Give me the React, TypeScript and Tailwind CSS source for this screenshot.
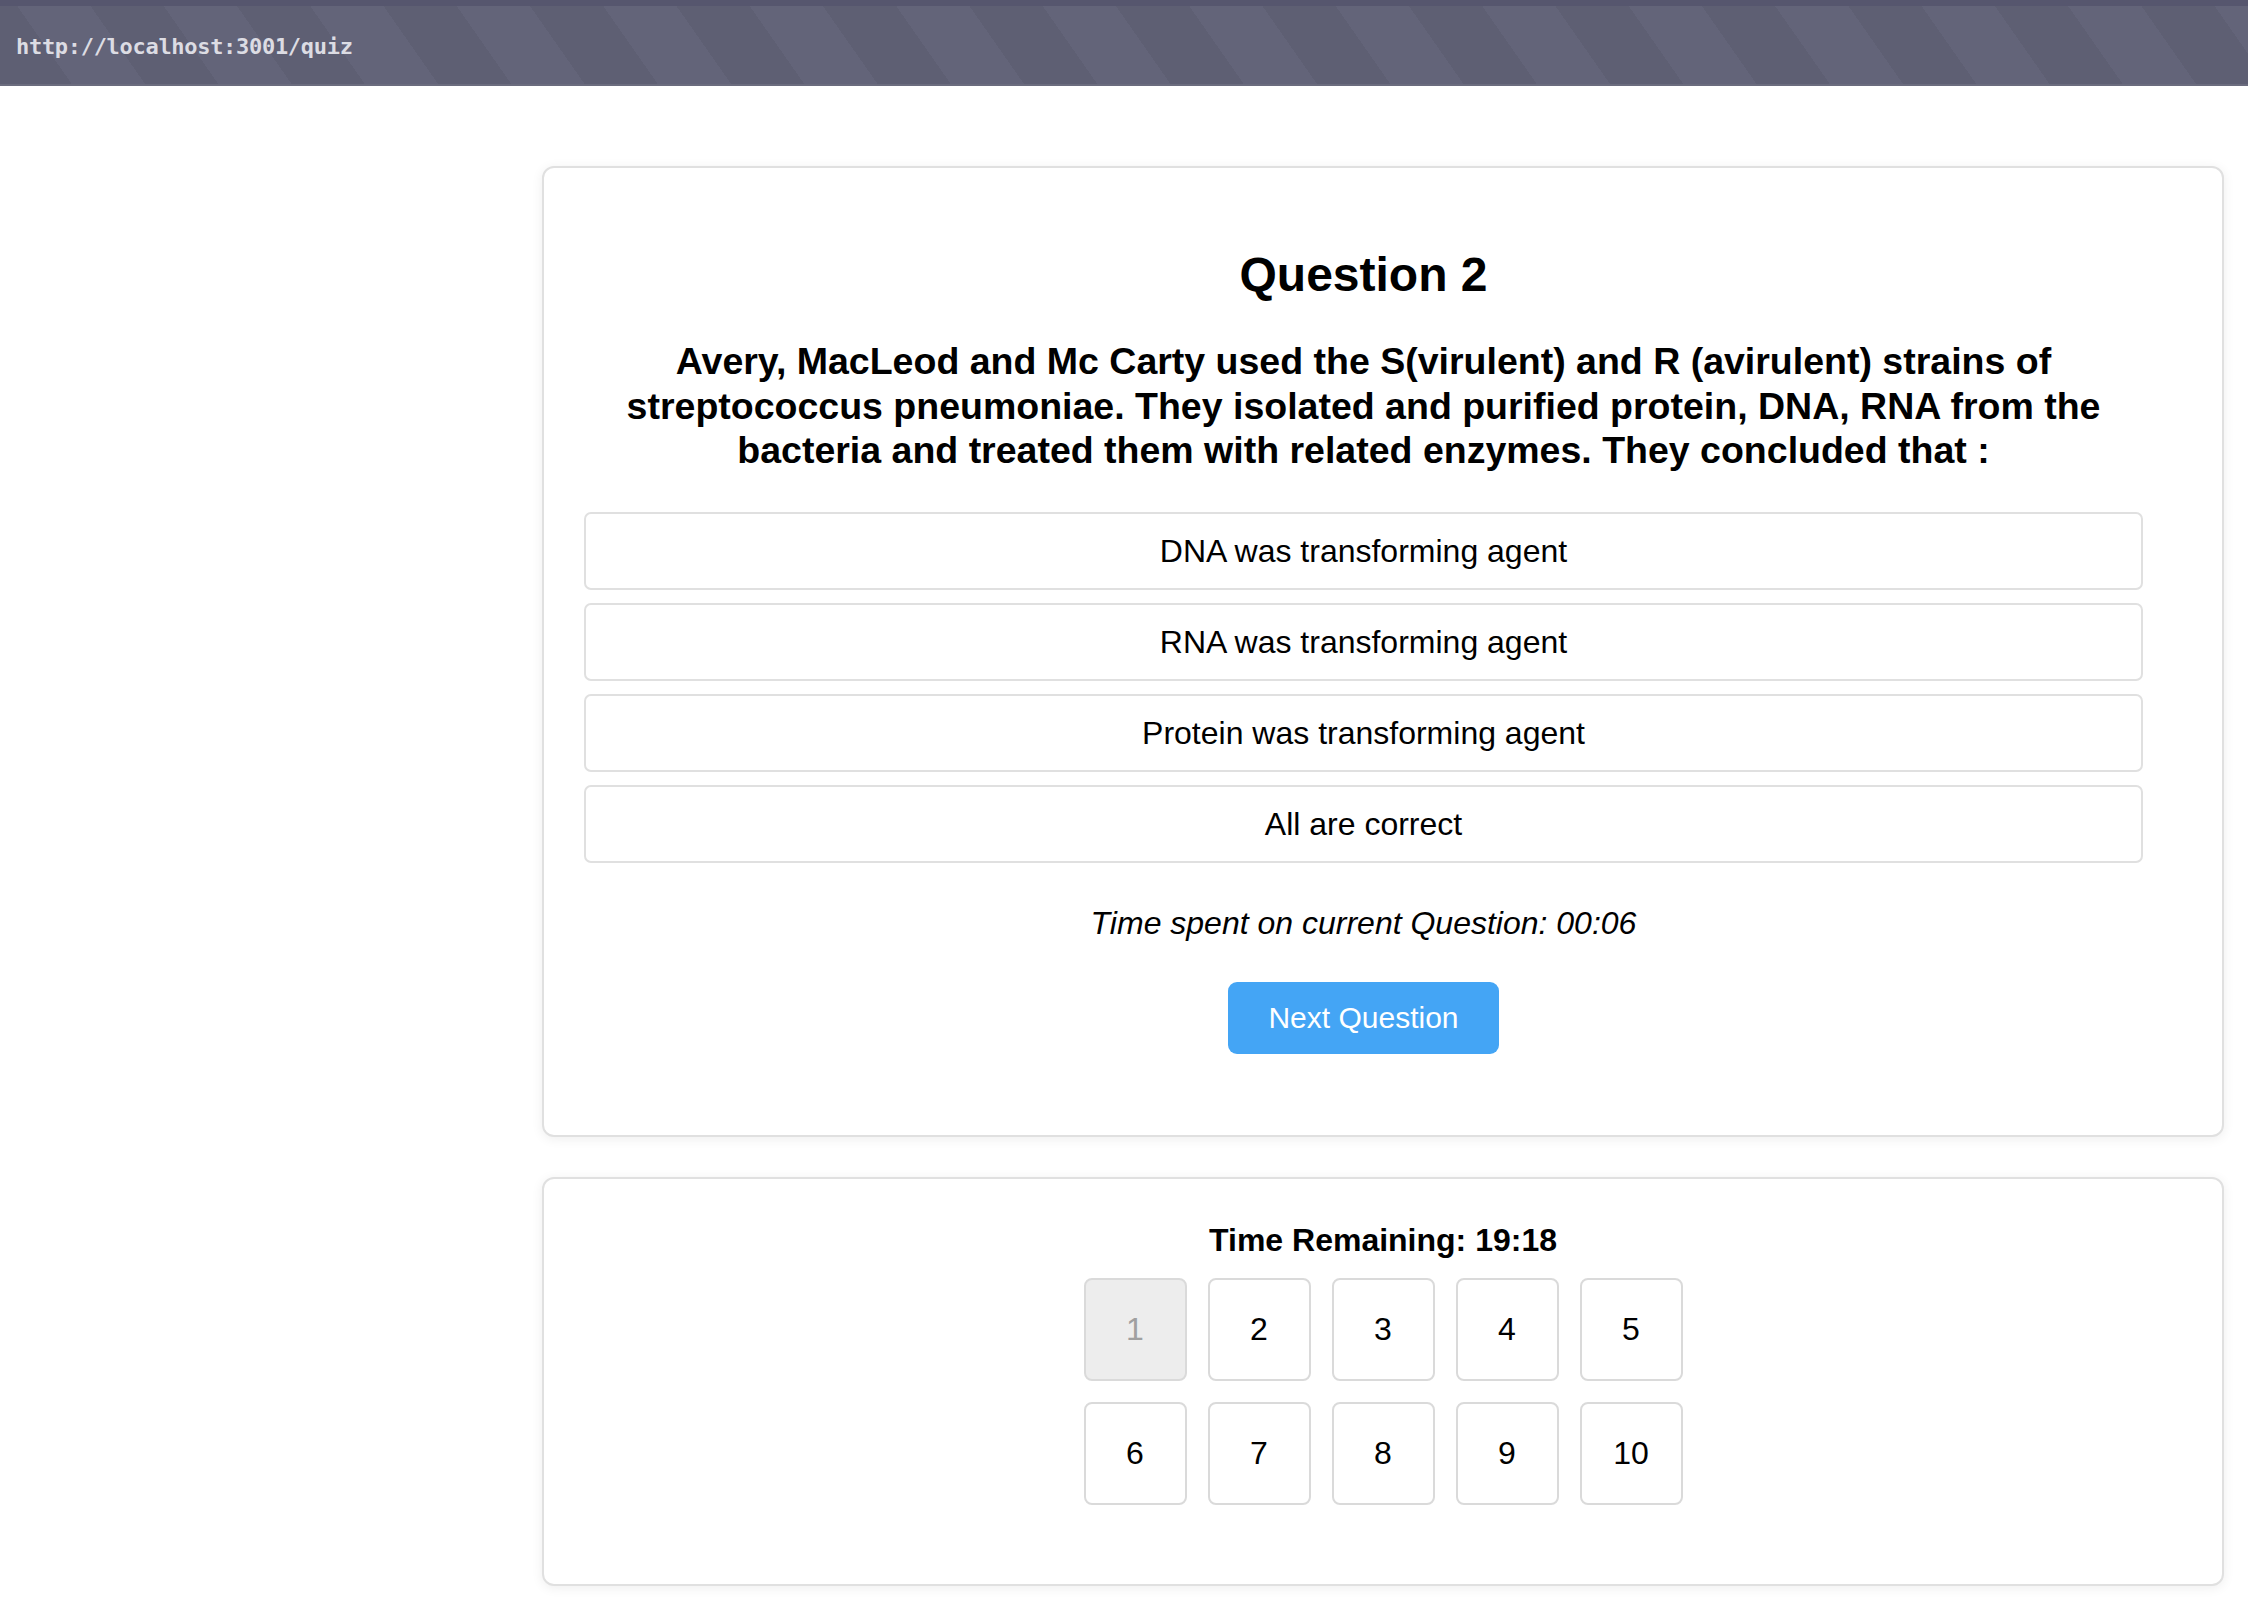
import React from "react"

const options = [
  "DNA was transforming agent",
  "RNA was transforming agent",
  "Protein was transforming agent",
  "All are correct",
]

const questionNumbers = [1, 2, 3, 4, 5, 6, 7, 8, 9, 10]

function AddressBar() {
  return (
    <div className="h-[86px] w-full bg-[#5f6074] bg-[repeating-linear-gradient(55deg,#5e5f73_0px,#5e5f73_60px,#636479_60px,#636479_120px)]">
      <div className="h-[6px] w-full bg-[#56566e]" />
      <div className="flex h-[80px] items-center border-b-2 border-[#6b6c7e] pl-[16px] pt-[2px] font-['DejaVu_Sans_Mono',monospace] text-[22px] font-bold tracking-[-0.3px] text-[#dcdce3]">
        http://localhost:3001/quiz
      </div>
    </div>
  )
}

function QuestionCard() {
  return (
    <section className="rounded-[12px] border-2 border-[#e0e0e0] bg-white pt-[79px] pb-[81px] pl-[40px] pr-[79px] shadow-[0_2px_12px_rgba(0,0,0,0.07)]">
      <div className="flex flex-col items-center text-center">
        <h2 className="text-[48px] leading-[55px] font-bold">Question 2</h2>
        <p className="mt-[37px] text-[37.5px] leading-[44.5px] font-bold">
          Avery, MacLeod and Mc Carty used the S(virulent) and R (avirulent) strains of
          <br />
          streptococcus pneumoniae. They isolated and purified protein, DNA, RNA from the
          <br />
          bacteria and treated them with related enzymes. They concluded that :
        </p>
        <div className="mt-[39px] flex w-full flex-col gap-[13px]">
          {options.map((o) => (
            <button
              key={o}
              className="h-[78px] w-full rounded-[7px] border-2 border-[#e0e0e0] bg-white text-[32px] text-black"
            >
              {o}
            </button>
          ))}
        </div>
        <p className="mt-[42px] text-[32px] leading-[37px] italic">
          Time spent on current Question: 00:06
        </p>
        <button className="mt-[40px] h-[72px] rounded-[9px] bg-[#44a5f5] px-[40px] text-[30px] text-white">
          Next Question
        </button>
      </div>
    </section>
  )
}

function NavigatorCard() {
  return (
    <section className="rounded-[12px] border-2 border-[#e0e0e0] bg-white pt-[43px] pb-[79px] shadow-[0_2px_12px_rgba(0,0,0,0.07)]">
      <div className="flex flex-col items-center">
        <h3 className="text-[32px] leading-[37px] font-bold">Time Remaining: 19:18</h3>
        <div className="mt-[19px] grid grid-cols-5 gap-[21px]">
          {questionNumbers.map((n) => (
            <button
              key={n}
              className={
                n === 1
                  ? "flex h-[103px] w-[103px] items-center justify-center rounded-[8px] border-2 border-[#dadada] bg-[#ededed] text-[32px] text-[#a0a0a0]"
                  : "flex h-[103px] w-[103px] items-center justify-center rounded-[8px] border-2 border-[#dadada] bg-white text-[32px] text-black"
              }
            >
              {n}
            </button>
          ))}
        </div>
      </div>
    </section>
  )
}

export default function App() {
  return (
    <div className="min-h-screen bg-white font-['Liberation_Sans',Arial,sans-serif] text-black">
      <AddressBar />
      <main className="flex flex-col gap-[40px] pt-[80px] pl-[542px] pr-[24px] pb-[24px]">
        <QuestionCard />
        <NavigatorCard />
      </main>
    </div>
  )
}
